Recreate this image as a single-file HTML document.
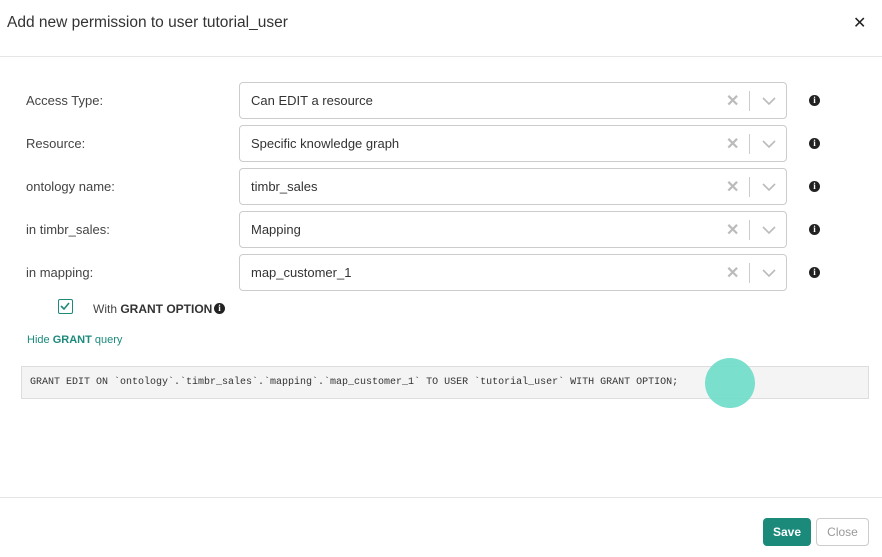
<!DOCTYPE html>
<html><head><style>
*{box-sizing:border-box;margin:0;padding:0}
body{width:882px;height:557px;background:#fff;font-family:"Liberation Sans",sans-serif;color:#333;position:relative;overflow:hidden}
.t{position:absolute;left:7px;top:14px;font-size:15.5px;color:#333}
.x{position:absolute;left:853px;top:13px;font-size:16px;color:#222}
.hl{position:absolute;left:0;width:882px;height:1px;background:#e5e5e5}
.lab{position:absolute;left:26px;font-size:13px;color:#444}
.sel{position:absolute;left:239px;width:548px;height:37px;border:1px solid #ccc;border-radius:4px;font-size:13px;color:#333;padding:10px 0 0 11px}
.sel .c{position:absolute;left:486px;top:8px;color:#bbb;font-size:16px;font-weight:bold}
.sel .d{position:absolute;left:509px;top:8px;width:1px;height:20px;background:#ccc}
.sel svg{position:absolute;left:522px;top:14px}
.i{position:absolute;left:809px;width:11px;height:11px;border-radius:50%;background:#222;color:#fff;font-size:9px;font-weight:bold;text-align:center;line-height:11px;font-family:"Liberation Serif",serif}
</style></head><body>
<div class="t">Add new permission to user tutorial_user</div>
<div class="x">✕</div>
<div class="hl" style="top:56px"></div>

<div class="lab" style="top:93px">Access Type:</div>
<div class="sel" style="top:82px">Can EDIT a resource<span class="c">✕</span><span class="d"></span><svg width="14" height="9"><path d="M1 1l6 6 6-6" fill="none" stroke="#bbb" stroke-width="1.6"/></svg></div>
<div class="i" style="top:95px">i</div>

<div class="lab" style="top:136px">Resource:</div>
<div class="sel" style="top:125px">Specific knowledge graph<span class="c">✕</span><span class="d"></span><svg width="14" height="9"><path d="M1 1l6 6 6-6" fill="none" stroke="#bbb" stroke-width="1.6"/></svg></div>
<div class="i" style="top:138px">i</div>

<div class="lab" style="top:179px">ontology name:</div>
<div class="sel" style="top:168px">timbr_sales<span class="c">✕</span><span class="d"></span><svg width="14" height="9"><path d="M1 1l6 6 6-6" fill="none" stroke="#bbb" stroke-width="1.6"/></svg></div>
<div class="i" style="top:181px">i</div>

<div class="lab" style="top:222px">in timbr_sales:</div>
<div class="sel" style="top:211px">Mapping<span class="c">✕</span><span class="d"></span><svg width="14" height="9"><path d="M1 1l6 6 6-6" fill="none" stroke="#bbb" stroke-width="1.6"/></svg></div>
<div class="i" style="top:224px">i</div>

<div class="lab" style="top:265px">in mapping:</div>
<div class="sel" style="top:254px">map_customer_1<span class="c">✕</span><span class="d"></span><svg width="14" height="9"><path d="M1 1l6 6 6-6" fill="none" stroke="#bbb" stroke-width="1.6"/></svg></div>
<div class="i" style="top:267px">i</div>

<div style="position:absolute;left:58px;top:299px;width:15px;height:15px;border:1.5px solid #1b8a7b;border-radius:2px"><svg width="12" height="12" style="position:absolute;left:0;top:0"><path d="M2 6l3 3 5-6" fill="none" stroke="#1b8a7b" stroke-width="1.6"/></svg></div>
<div style="position:absolute;left:93px;top:302px;font-size:12px;color:#444">With <b style="color:#333">GRANT OPTION</b></div>
<div class="i" style="left:214px;top:303px">i</div>

<div style="position:absolute;left:27px;top:334px;font-size:11px;color:#1b8a7b">Hide <b>GRANT</b> query</div>

<div style="position:absolute;left:21px;top:366px;width:848px;height:33px;background:#f4f4f4;border:1px solid #ddd;font-family:'Liberation Mono',monospace;font-size:10px;color:#333;padding:10px 0 0 8px;white-space:pre">GRANT EDIT ON `ontology`.`timbr_sales`.`mapping`.`map_customer_1` TO USER `tutorial_user` WITH GRANT OPTION;</div>
<div style="position:absolute;left:705px;top:358px;width:50px;height:50px;border-radius:50%;background:#6fdcc8;opacity:.92"></div>

<div class="hl" style="top:497px"></div>
<div style="position:absolute;left:763px;top:518px;width:48px;height:28px;background:#1b8a7b;border-radius:4px;color:#fff;font-size:12px;font-weight:bold;text-align:center;line-height:28px">Save</div>
<div style="position:absolute;left:816px;top:518px;width:53px;height:28px;border:1px solid #ccc;border-radius:4px;color:#999;font-size:12px;text-align:center;line-height:26px">Close</div>
</body></html>
